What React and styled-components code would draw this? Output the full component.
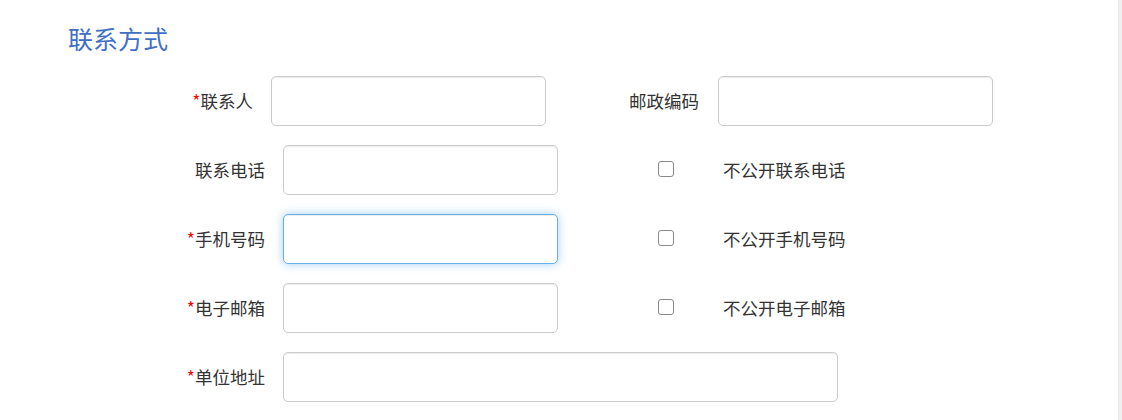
import React from "react";
import styled, { createGlobalStyle, css } from "styled-components";

const GlobalStyle = createGlobalStyle`
  html, body, #root { margin: 0; padding: 0; height: 100%; }
  body {
    background: #ffffff;
    overflow: hidden;
    font-family: "Noto Sans CJK SC", "Noto Sans", sans-serif;
    color: #333333;
  }
`;

const Page = styled.div`
  display: flex;
  height: 100%;
`;

const Main = styled.main`
  flex: 1;
  padding: 20px 0 0 0;
`;

const ScrollTrack = styled.div`
  width: 3px;
  background: #f0f0f0;
  border-left: 1px solid #ececec;
`;

const Title = styled.h2`
  margin: 0 0 20px 68px;
  font-size: 25px;
  line-height: 36px;
  font-weight: 400;
  color: #4070c6;
`;

const Form = styled.div`
  display: flex;
  flex-direction: column;
  gap: 19px;
  padding-left: 150px;
`;

const Row = styled.div`
  display: flex;
  align-items: center;
  height: 50px;
`;

const Label = styled.label`
  width: ${(p) => p.$width}px;
  flex: none;
  text-align: right;
  font-size: 17.5px;
  line-height: 24px;
  color: #333;
  white-space: nowrap;
`;

const Star = styled.span`
  color: #ff0000;
`;

const TextInput = styled.input`
  box-sizing: border-box;
  flex: none;
  width: ${(p) => p.$width || 275}px;
  height: 50px;
  margin-left: ${(p) => p.$gap || 18}px;
  padding: 0 12px;
  border: 1px solid #cccccc;
  border-radius: 5px;
  background: #fff;
  font-size: 17.5px;
  font-family: inherit;
  color: #555;
  outline: none;
  box-shadow: inset 0 1px 1px rgba(0, 0, 0, 0.075);
  ${(p) =>
    p.$focused &&
    css`
      border-color: #66afe9;
      box-shadow: inset 0 1px 1px rgba(0, 0, 0, 0.075),
        0 0 10px rgba(102, 175, 233, 0.6);
    `}
`;

const CheckCell = styled.div`
  display: flex;
  align-items: center;
  padding-left: 100px;
`;

const CheckBox = styled.input.attrs({ type: "checkbox" })`
  appearance: none;
  -webkit-appearance: none;
  box-sizing: border-box;
  width: 16px;
  height: 16px;
  margin: -2px 0 0 0;
  border: 1px solid #8a8a8a;
  border-radius: 3px;
  background: #fff;
`;

const CheckText = styled.span`
  margin-left: 49px;
  font-size: 17.5px;
  line-height: 24px;
  color: #333;
  white-space: nowrap;
`;

const checkRows = [
  { label: "联系电话", required: false, check: "不公开联系电话" },
  { label: "手机号码", required: true, check: "不公开手机号码", focused: true },
  { label: "电子邮箱", required: true, check: "不公开电子邮箱" },
];

export default function App() {
  return (
    <>
      <GlobalStyle />
      <Page>
        <Main>
          <Title>联系方式</Title>
          <Form>
            <Row>
              <Label $width={103}>
                <Star>*</Star>联系人
              </Label>
              <TextInput />
              <Label $width={153}>邮政编码</Label>
              <TextInput $gap={19} />
            </Row>
            {checkRows.map((r) => (
              <Row key={r.label}>
                <Label $width={115}>
                  {r.required && <Star>*</Star>}
                  {r.label}
                </Label>
                <TextInput $focused={r.focused} />
                <CheckCell>
                  <CheckBox />
                  <CheckText>{r.check}</CheckText>
                </CheckCell>
              </Row>
            ))}
            <Row>
              <Label $width={115}>
                <Star>*</Star>单位地址
              </Label>
              <TextInput $width={555} />
            </Row>
          </Form>
        </Main>
        <ScrollTrack />
      </Page>
    </>
  );
}
